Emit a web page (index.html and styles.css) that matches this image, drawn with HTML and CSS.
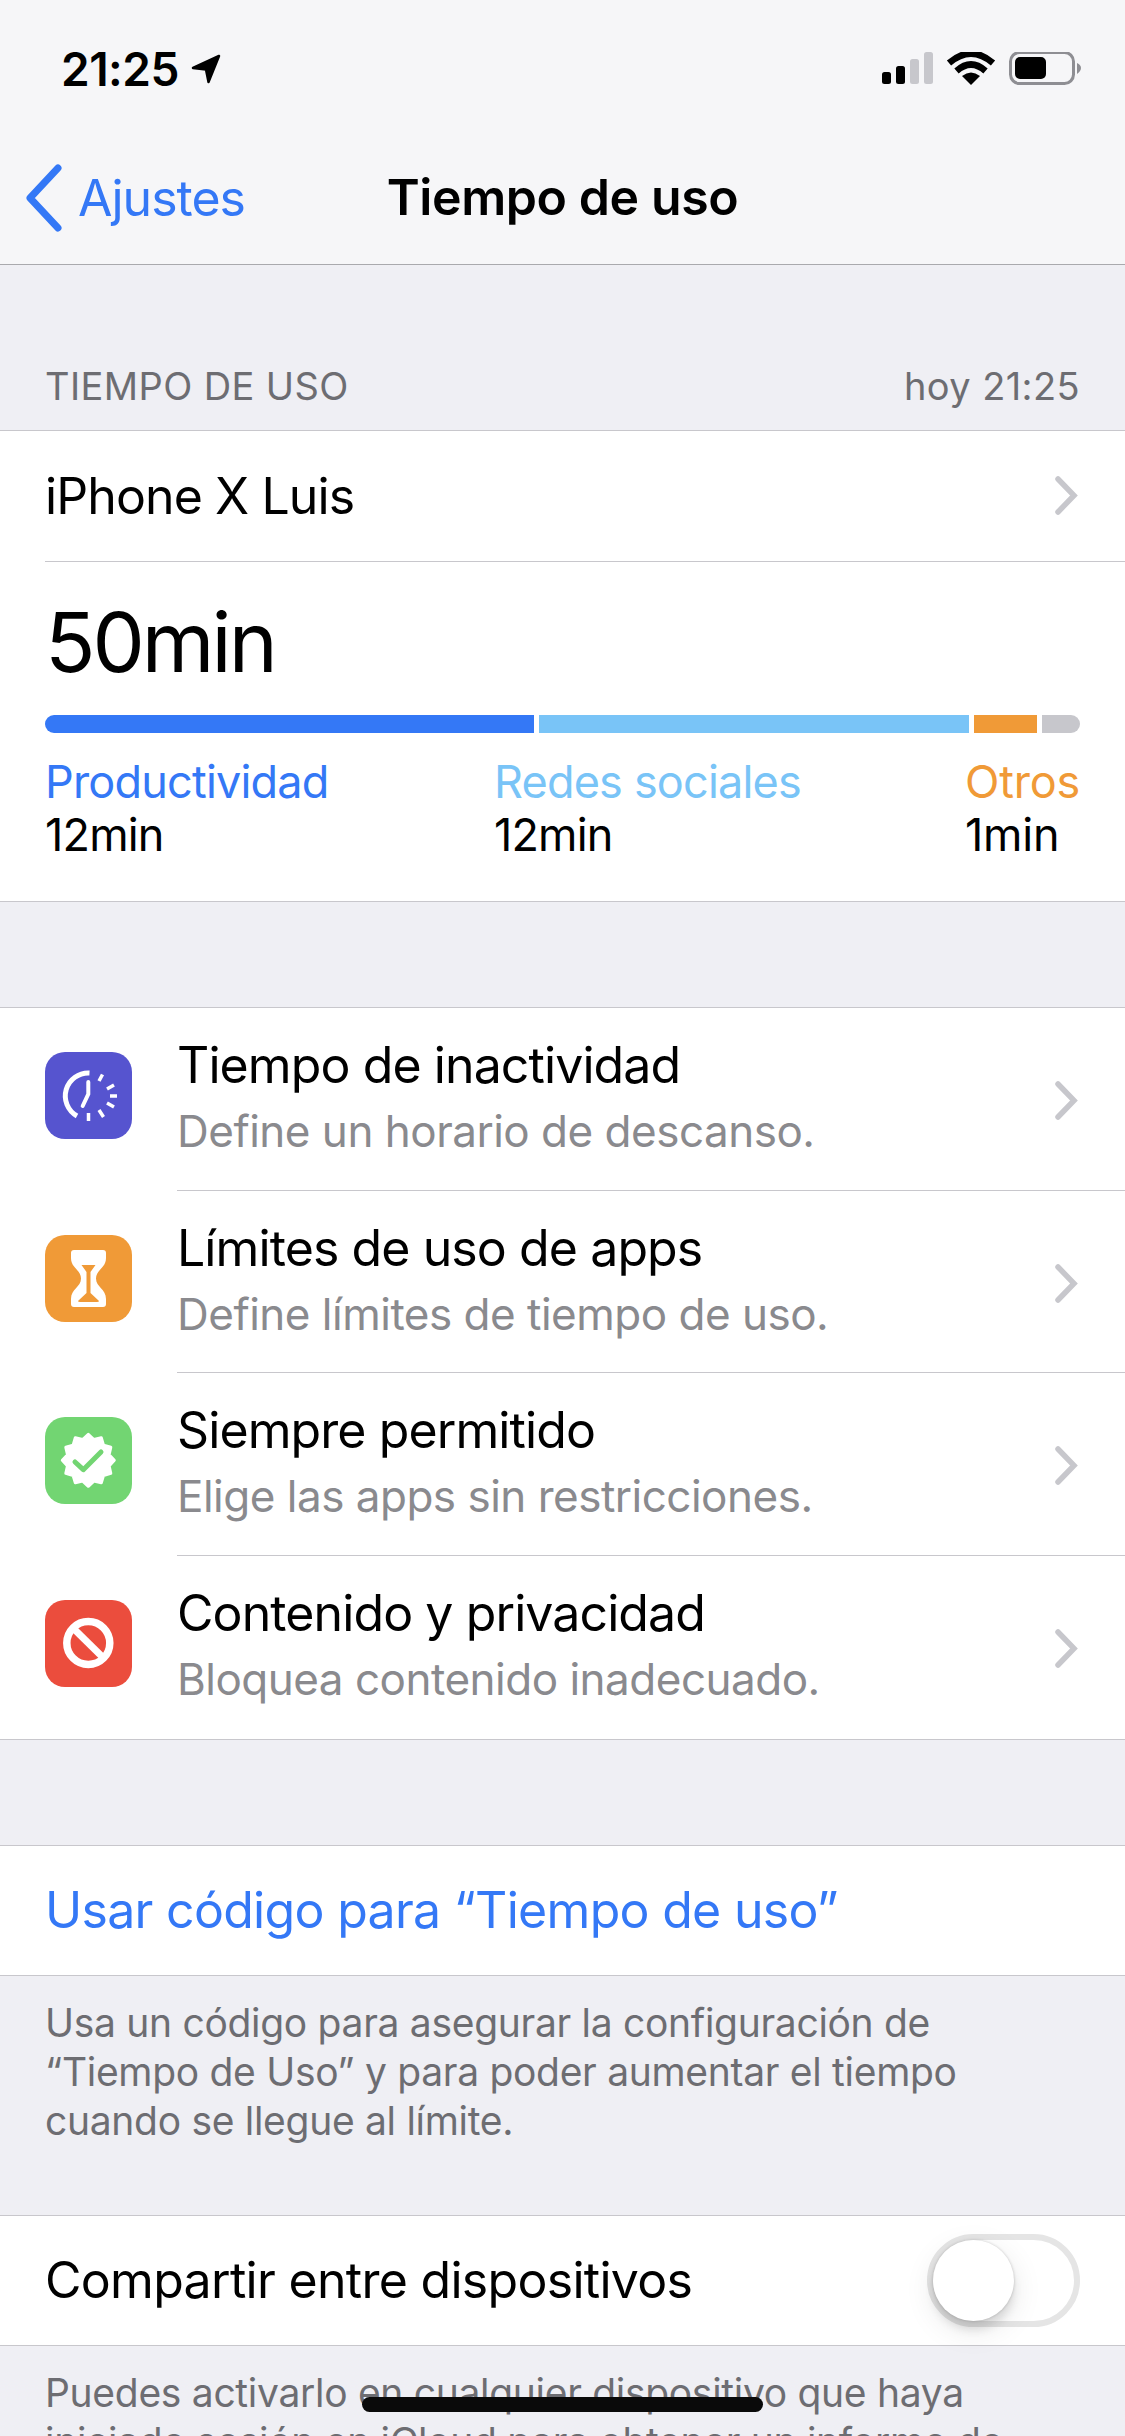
FILE: index.html
```html
<!DOCTYPE html>
<html lang="es">
<head>
    <meta charset="UTF-8">
    <meta name="viewport" content="width=device-width, initial-scale=1.0">
    <title>Tiempo de uso</title>
    <link rel="stylesheet" href="styles.css">
</head>
<body>
    <header class="topbar">
      <div class="statusbar">
        <div class="clock">
          <span>21:25</span>
          <svg class="arrow" width="30" height="30" viewBox="0 0 30 30"><path d="M28 2 L2 14 L15 15.500 L17.500 28 Z" fill="#000" stroke="#000" stroke-width="2.500" stroke-linejoin="round"/></svg>
        </div>
        <svg class="status-icons" width="200" height="34" viewBox="0 0 200 34">
          <rect x="0" y="20" width="9" height="12" rx="2.5" fill="#000"/>
          <rect x="14" y="14" width="9" height="18" rx="2.5" fill="#000"/>
          <rect x="28" y="7" width="9" height="25" rx="2.5" fill="#c7c7cc"/>
          <rect x="42" y="0" width="9" height="32" rx="2.5" fill="#c7c7cc"/>
          <path d="M67 11 Q89 -8 111 11" fill="none" stroke="#000" stroke-width="6.5"/>
          <path d="M74.500 19 Q89 6 103.500 19" fill="none" stroke="#000" stroke-width="6.500"/>
          <path d="M80 24 Q89 17 98 24 L89 33 Z" fill="#000"/>
          <rect x="128.500" y="0.500" width="63" height="31" rx="9" fill="none" stroke="#8e8e93" stroke-width="3"/>
          <rect x="133" y="5" width="31" height="22" rx="5" fill="#000"/>
          <path d="M195 11 Q199 13 199 16 Q199 19 195 22 Z" fill="#8e8e93"/>
        </svg>
      </div>
      <nav class="navbar">
        <a class="back">
          <svg width="40" height="68" viewBox="0 0 40 68"><path d="M33 4 L5 34 L33 64" fill="none" stroke="#3478f6" stroke-width="7" stroke-linecap="round" stroke-linejoin="round"/></svg>
          <span>Ajustes</span>
        </a>
        <h1>Tiempo de uso</h1>
      </nav>
    </header>

    <main>
      <div class="section-head">
        <span>TIEMPO DE USO</span>
        <span>hoy 21:25</span>
      </div>

      <section class="card">
        <div class="device-row">
          <span>iPhone X Luis</span>
          <svg class="chevron" width="26" height="40" viewBox="0 0 26 40"><path d="M4 3 L20 19.500 L4 36" fill="none" stroke="#c7c7cc" stroke-width="5.500" stroke-linecap="round"/></svg>
        </div>
        <div class="usage">
          <div class="total">50min</div>
          <div class="bar">
            <div class="seg seg-blue"></div>
            <div class="seg seg-sky"></div>
            <div class="seg seg-orange"></div>
            <div class="seg seg-gray"></div>
          </div>
          <div class="legend">
            <div class="legend-item legend-prod"><span class="blue">Productividad</span><span>12min</span></div>
            <div class="legend-item legend-social"><span class="sky">Redes sociales</span><span>12min</span></div>
            <div class="legend-item legend-other"><span class="orange">Otros</span><span>1min</span></div>
          </div>
        </div>
      </section>

      <section class="card list">
        <div class="row">
          <svg class="app-icon" viewBox="0 0 87 87">
            <rect width="87" height="87" rx="20" fill="#5654cf"/>
            <path d="M44.500 21 A23 23 0 0 0 32 64" fill="none" stroke="#fff" stroke-width="5"/>
            <path d="M43.300 30 V42 L37.700 54" fill="none" stroke="#fff" stroke-width="4" stroke-linecap="round"/>
            <path d="M54 29 L57.500 22.500 M62 37 L69 33 M65 44 H72 M62 51 L69 55 M54 58 L58.500 65 M43.500 61 V69" stroke="#fff" stroke-width="3.500"/>
          </svg>
          <div class="row-body">
            <div class="row-text">
              <div class="row-title">Tiempo de inactividad</div>
              <div class="row-sub">Define un horario de descanso.</div>
            </div>
            <svg class="chevron" width="26" height="40" viewBox="0 0 26 40"><path d="M4 3 L20 19.500 L4 36" fill="none" stroke="#c7c7cc" stroke-width="5.500" stroke-linecap="round"/></svg>
          </div>
        </div>
        <div class="row">
          <svg class="app-icon" viewBox="0 0 87 87">
            <rect width="87" height="87" rx="20" fill="#f09a37"/>
            <path d="M29 15 H58 Q61 15 61 18 V23 C61 33 51 35 51 43.500 C51 52 61 54 61 64 V69 Q61 72 58 72 H29 Q26 72 26 69 V64 C26 54 36 52 36 43.500 C36 35 26 33 26 23 V18 Q26 15 29 15 Z" fill="#fff"/>
            <path d="M36.500 30 H50.500 L45.500 37 V58 L54 66 Q54 67 52 67 H35 Q33 67 33 66 L41.500 58 V37 Z" fill="#f09a37"/>
          </svg>
          <div class="row-body">
            <div class="row-text">
              <div class="row-title">Límites de uso de apps</div>
              <div class="row-sub">Define límites de tiempo de uso.</div>
            </div>
            <svg class="chevron" width="26" height="40" viewBox="0 0 26 40"><path d="M4 3 L20 19.500 L4 36" fill="none" stroke="#c7c7cc" stroke-width="5.500" stroke-linecap="round"/></svg>
          </div>
        </div>
        <div class="row">
          <svg class="app-icon" viewBox="0 0 87 87">
            <rect width="87" height="87" rx="20" fill="#72d572"/>
            <polygon points="69.300,43.300 64.100,48.900 65.800,56.300 58.500,58.500 56.300,65.800 48.900,64.100 43.300,69.300 37.700,64.100 30.300,65.800 28.100,58.500 20.800,56.300 22.500,48.900 17.300,43.300 22.500,37.700 20.800,30.300 28.100,28.100 30.300,20.800 37.700,22.500 43.300,17.300 48.900,22.500 56.300,20.800 58.500,28.100 65.800,30.300 64.100,37.700" fill="#fff" stroke="#fff" stroke-width="3" stroke-linejoin="round"/>
            <path d="M30 45 L38.300 52.700 L56 35" fill="none" stroke="#72d572" stroke-width="5" stroke-linecap="round" stroke-linejoin="round"/>
          </svg>
          <div class="row-body">
            <div class="row-text">
              <div class="row-title">Siempre permitido</div>
              <div class="row-sub">Elige las apps sin restricciones.</div>
            </div>
            <svg class="chevron" width="26" height="40" viewBox="0 0 26 40"><path d="M4 3 L20 19.500 L4 36" fill="none" stroke="#c7c7cc" stroke-width="5.500" stroke-linecap="round"/></svg>
          </div>
        </div>
        <div class="row">
          <svg class="app-icon" viewBox="0 0 87 87">
            <rect width="87" height="87" rx="20" fill="#eb4d3d"/>
            <circle cx="43.300" cy="43" r="21.500" fill="none" stroke="#fff" stroke-width="7.500"/>
            <path d="M28 28 L58.500 58" stroke="#fff" stroke-width="7"/>
          </svg>
          <div class="row-body">
            <div class="row-text">
              <div class="row-title">Contenido y privacidad</div>
              <div class="row-sub">Bloquea contenido inadecuado.</div>
            </div>
            <svg class="chevron" width="26" height="40" viewBox="0 0 26 40"><path d="M4 3 L20 19.500 L4 36" fill="none" stroke="#c7c7cc" stroke-width="5.500" stroke-linecap="round"/></svg>
          </div>
        </div>
      </section>

      <section class="card code-card">
        <a class="code-link">Usar código para “Tiempo de uso”</a>
      </section>
      <p class="note">Usa un código para asegurar la configuración de<br>“Tiempo de Uso” y para poder aumentar el tiempo<br>cuando se llegue al límite.</p>

      <section class="card share-card">
        <span>Compartir entre dispositivos</span>
        <div class="toggle"><div class="knob"></div></div>
      </section>
      <p class="note">Puedes activarlo en cualquier dispositivo que haya<br>iniciado sesión en iCloud para obtener un informe de</p>
    </main>

    <div class="home-bar"></div>
</body>
</html>
```

FILE: styles.css
```css
/* Ajustes > Tiempo de uso */
html, body {
  margin: 0;
  padding: 0;
}

body {
  position: relative;
  width: 1125px;
  height: 2436px;
  overflow: hidden;
  background-color: #efeff4;
  font-family: Inter, "Liberation Sans", sans-serif;
  color: #000;
}

.topbar {
  height: 264px;
  background-color: #f6f6f8;
  border-bottom: 1px solid #a9a9ad;
}

.statusbar {
  height: 132px;
  display: flex;
  justify-content: space-between;
  align-items: flex-start;
  padding: 52px 43px 0 61px;
  box-sizing: border-box;
}

.clock {
  display: flex;
  align-items: center;
  gap: 12px;
  font-size: 46px;
  line-height: 34px;
  font-weight: 600;
  letter-spacing: -0.5px;
}

.status-icons {
  display: block;
}

.navbar {
  position: relative;
  height: 131px;
  display: flex;
  justify-content: center;
  align-items: center;
  padding-bottom: 2px;
  box-sizing: border-box;
}

.navbar h1 {
  margin: 0;
  font-size: 50px;
  font-weight: 600;
  letter-spacing: -0.4px;
}

.back {
  position: absolute;
  left: 25px;
  top: 32px;
  display: flex;
  align-items: center;
  gap: 13px;
  color: #3478f6;
  font-size: 50px;
  letter-spacing: -1px;
}

.section-head {
  height: 165px;
  display: flex;
  justify-content: space-between;
  align-items: flex-end;
  padding: 0 45px 21px;
  box-sizing: border-box;
  font-size: 38px;
  line-height: 46px;
  letter-spacing: 0.4px;
  color: #6d6d72;
}

.card {
  background-color: #fff;
  border-top: 1px solid #c8c7cc;
  border-bottom: 1px solid #c8c7cc;
}

.device-row {
  height: 130px;
  margin-left: 45px;
  padding-right: 45px;
  display: flex;
  justify-content: space-between;
  align-items: center;
  border-bottom: 1px solid #c8c7cc;
  font-size: 50px;
  letter-spacing: -0.9px;
}

.chevron {
  display: block;
  flex-shrink: 0;
}

.usage {
  height: 339px;
  padding: 0 45px;
  box-sizing: border-box;
}

.total {
  height: 153px;
  display: flex;
  align-items: center;
  padding-top: 6px;
  box-sizing: border-box;
  font-size: 83px;
  letter-spacing: -3px;
}

.bar {
  display: flex;
  gap: 5px;
  height: 18px;
  border-radius: 9px;
  overflow: hidden;
}

.seg {
  height: 100%;
}

.seg-blue { width: 489px; background-color: #3478f6; }
.seg-sky { width: 430px; background-color: #79c4f7; }
.seg-orange { width: 63px; background-color: #f09a37; }
.seg-gray { flex: 1; background-color: #c7c7cc; }

.legend {
  display: flex;
  padding-top: 22px;
  font-size: 45px;
  line-height: 53px;
  letter-spacing: -0.8px;
}

.legend-item {
  display: flex;
  flex-direction: column;
}

.legend-prod { width: 449px; }
.legend-social { width: 471px; }
.legend-other { letter-spacing: -0.2px; }

.blue { color: #3478f6; }
.sky { color: #79c4f7; }
.orange { color: #f09a37; }

.list {
  margin-top: 105px;
}

.row {
  height: 182.7px;
  display: flex;
  align-items: center;
  padding-left: 45px;
}

.app-icon {
  width: 87px;
  height: 87px;
  flex-shrink: 0;
  margin-bottom: 8px;
}

.row-body {
  flex: 1;
  height: 100%;
  margin-left: 45px;
  padding-right: 45px;
  display: flex;
  justify-content: space-between;
  align-items: center;
  border-bottom: 1px solid #c8c7cc;
  box-sizing: border-box;
}

.row-body .chevron {
  margin-top: 4px;
}

.row:last-child .row-body {
  border-bottom: none;
}

.row-text {
  padding-bottom: 6px;
}

.row-title {
  font-size: 50px;
  line-height: 62px;
  letter-spacing: -0.9px;
}

.row-sub {
  margin-top: 8px;
  font-size: 44px;
  line-height: 54px;
  color: #8a8a8e;
  letter-spacing: -0.5px;
}

.code-card {
  margin-top: 105px;
  height: 131px;
  display: flex;
  align-items: center;
  padding-left: 45px;
  box-sizing: border-box;
}

.code-link {
  color: #3478f6;
  font-size: 50px;
  letter-spacing: -0.7px;
}

.note {
  margin: 0;
  padding: 22px 45px 0;
  font-size: 39px;
  line-height: 49px;
  color: #6d6d72;
  letter-spacing: -0.3px;
}

.share-card {
  margin-top: 70px;
  height: 131px;
  padding: 0 45px;
  display: flex;
  justify-content: space-between;
  align-items: center;
  box-sizing: border-box;
  font-size: 50px;
  letter-spacing: -0.7px;
}

.toggle {
  width: 153px;
  height: 93px;
  border: 6px solid #e5e5e5;
  border-radius: 47px;
  box-sizing: border-box;
  display: flex;
  align-items: center;
}

.knob {
  width: 81px;
  height: 81px;
  border-radius: 50%;
  background-color: #fff;
  box-shadow: 0 9px 9px rgba(0, 0, 0, 0.1), 0 0 3px rgba(0, 0, 0, 0.2), 0 9px 30px rgba(0, 0, 0, 0.1);
}

.home-bar {
  position: absolute;
  left: 362px;
  top: 2397px;
  width: 401px;
  height: 15px;
  border-radius: 8px;
  background-color: #0a0a0a;
}
```
